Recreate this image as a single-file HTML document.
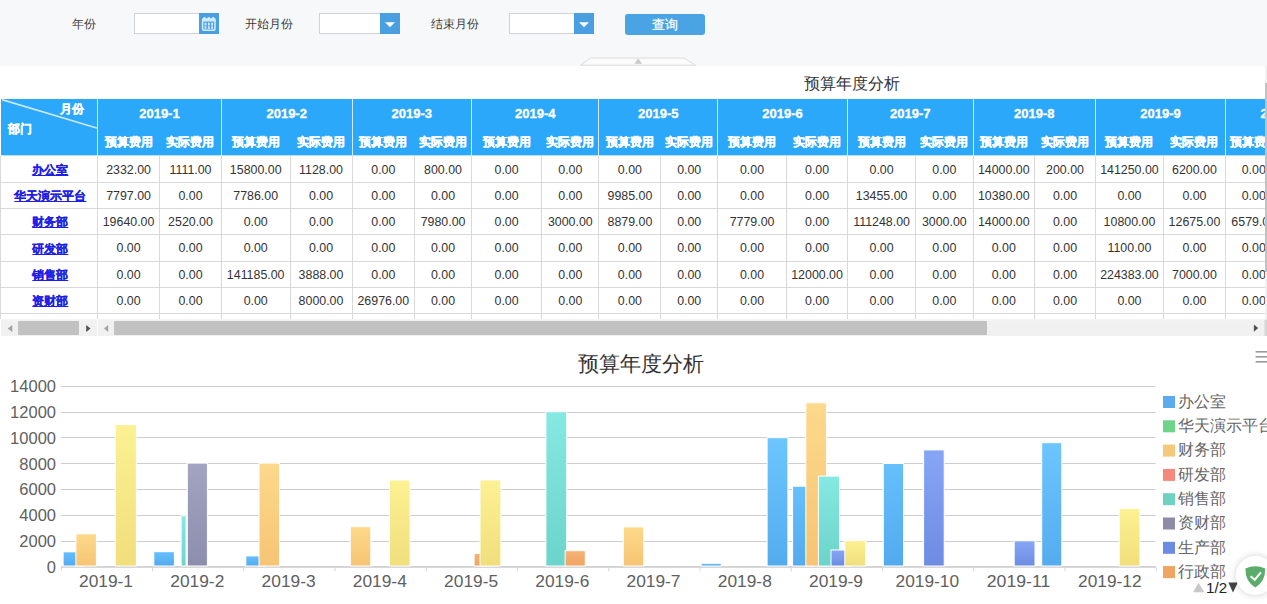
<!DOCTYPE html>
<html><head><meta charset="utf-8"><style>
*{margin:0;padding:0;box-sizing:border-box}
html,body{width:1267px;height:604px;overflow:hidden;background:#f7f8fa;font-family:"Liberation Sans",sans-serif}
.abs{position:absolute}
.lbl{position:absolute;font-family:"Liberation Serif",serif;font-size:12px;color:#3a3a3a;line-height:20px;top:13.5px}
.inp{position:absolute;top:13px;height:21px;background:#fff;border:1px solid #cfd3d8}
.btnb{position:absolute;top:13px;height:21px;width:20px;background:#4a9fe0}
.th{position:absolute;color:#fff;font-weight:bold;text-align:center;white-space:nowrap;-webkit-text-stroke:0.3px #fff}
.vl{position:absolute;width:1px;background:#d9d9d9}
.hl{position:absolute;height:1px;background:#d9d9d9}
.td{position:absolute;font-size:12.4px;color:#333;text-align:center;white-space:nowrap;line-height:26px}
.dp{position:absolute;left:1px;width:96px;text-align:center;font-size:12px;font-weight:bold;color:#1e1ee6;text-decoration:underline;-webkit-text-stroke:0.2px #1e1ee6;line-height:26px;white-space:nowrap}
</style></head><body>

<div class="lbl" style="left:72px">年份</div>
<div class="inp" style="left:134px;width:66px"></div>
<div class="btnb" style="left:199px;background:#4a9fe0"><svg width="20" height="21" viewBox="0 0 20 21"><rect x="3.6" y="6.2" width="12.4" height="11" rx="1.8" fill="none" stroke="#d4ecff" stroke-width="1.5"/><rect x="3" y="5.5" width="13.6" height="3" fill="#d4ecff"/><g fill="#d4ecff"><circle cx="5.5" cy="5.3" r="1.3"/><circle cx="9.8" cy="5.3" r="1.3"/><circle cx="14.1" cy="5.3" r="1.3"/><rect x="5.6" y="9.6" width="1.8" height="3"/><rect x="8.9" y="9.6" width="1.8" height="3"/><rect x="12.2" y="9.6" width="1.8" height="3"/><rect x="5.6" y="13.3" width="1.8" height="2.6"/><rect x="8.9" y="13.3" width="1.8" height="2.6"/><rect x="12.2" y="13.3" width="1.8" height="2.6"/></g></svg></div>
<div class="lbl" style="left:245px">开始月份</div>
<div class="inp" style="left:319px;width:62px"></div>
<div class="btnb" style="left:380px"><svg width="20" height="21"><path d="M5 9.2h10l-5 5z" fill="#fff"/></svg></div>
<div class="lbl" style="left:431px">结束月份</div>
<div class="inp" style="left:509px;width:66px"></div>
<div class="btnb" style="left:574px"><svg width="20" height="21"><path d="M5 9.2h10l-5 5z" fill="#fff"/></svg></div>
<div class="abs" style="left:625px;top:13.5px;width:80px;height:21px;background:#4aa4e3;border-radius:3px;color:#fff;font-size:13px;text-align:center;line-height:21px;-webkit-text-stroke:0.25px #fff">查询</div>
<svg class="abs" style="left:0;top:0" width="1267" height="70"><path d="M580.5 65.2 L590.5 58 H684 L695.5 65.2z" fill="#fbfbfc" stroke="#dcdcdc" stroke-width="1"/><path d="M634.3 63.8 L638.2 58.6 L642.1 63.8z" fill="#cacaca"/></svg>
<div class="abs" style="left:0;top:66px;width:1267px;height:538px;background:#fff"></div>
<div class="abs" style="left:804px;top:73.6px;font-size:16px;color:#333;line-height:20px">预算年度分析</div>
<div class="abs" style="left:1px;top:99.3px;width:1264px;height:56.4px;background:#2ca8fb"></div>
<div class="abs" style="left:1px;top:155px;width:1264px;height:1px;background:#b9e0fb"></div>
<svg class="abs" style="left:1px;top:99px" width="97" height="57"><line x1="1" y1="0.6" x2="96.5" y2="29.3" stroke="#c9e8fd" stroke-width="1.7"/></svg>
<div class="th" style="left:60px;top:101px;font-size:12px;line-height:16px">月份</div>
<div class="th" style="left:8px;top:121px;font-size:12px;line-height:16px">部门</div>
<div class="abs" style="left:97px;top:99px;width:1px;height:57px;background:#d2ecfd"></div>
<div class="th" style="left:97.5px;width:123.9px;top:104px;font-size:13px;line-height:20px">2019-1</div>
<div class="th" style="left:97.5px;width:62.1px;top:134px;font-size:12px;line-height:16px">预算费用</div>
<div class="th" style="left:159.6px;width:61.8px;top:134px;font-size:12px;line-height:16px">实际费用</div>
<div class="abs" style="left:221px;top:99px;width:1px;height:57px;background:#d2ecfd"></div>
<div class="th" style="left:221.4px;width:130.6px;top:104px;font-size:13px;line-height:20px">2019-2</div>
<div class="th" style="left:221.4px;width:68.6px;top:134px;font-size:12px;line-height:16px">预算费用</div>
<div class="th" style="left:290.0px;width:62.0px;top:134px;font-size:12px;line-height:16px">实际费用</div>
<div class="abs" style="left:352px;top:99px;width:1px;height:57px;background:#d2ecfd"></div>
<div class="th" style="left:352.0px;width:119.5px;top:104px;font-size:13px;line-height:20px">2019-3</div>
<div class="th" style="left:352.0px;width:62.6px;top:134px;font-size:12px;line-height:16px">预算费用</div>
<div class="th" style="left:414.6px;width:56.9px;top:134px;font-size:12px;line-height:16px">实际费用</div>
<div class="abs" style="left:471px;top:99px;width:1px;height:57px;background:#d2ecfd"></div>
<div class="th" style="left:471.5px;width:127.5px;top:104px;font-size:13px;line-height:20px">2019-4</div>
<div class="th" style="left:471.5px;width:70.2px;top:134px;font-size:12px;line-height:16px">预算费用</div>
<div class="th" style="left:541.7px;width:57.3px;top:134px;font-size:12px;line-height:16px">实际费用</div>
<div class="abs" style="left:598px;top:99px;width:1px;height:57px;background:#d2ecfd"></div>
<div class="th" style="left:599.0px;width:118.6px;top:104px;font-size:13px;line-height:20px">2019-5</div>
<div class="th" style="left:599.0px;width:61.8px;top:134px;font-size:12px;line-height:16px">预算费用</div>
<div class="th" style="left:660.8px;width:56.8px;top:134px;font-size:12px;line-height:16px">实际费用</div>
<div class="abs" style="left:717px;top:99px;width:1px;height:57px;background:#d2ecfd"></div>
<div class="th" style="left:717.6px;width:130.0px;top:104px;font-size:13px;line-height:20px">2019-6</div>
<div class="th" style="left:717.6px;width:68.9px;top:134px;font-size:12px;line-height:16px">预算费用</div>
<div class="th" style="left:786.5px;width:61.1px;top:134px;font-size:12px;line-height:16px">实际费用</div>
<div class="abs" style="left:847px;top:99px;width:1px;height:57px;background:#d2ecfd"></div>
<div class="th" style="left:847.6px;width:125.5px;top:104px;font-size:13px;line-height:20px">2019-7</div>
<div class="th" style="left:847.6px;width:68.0px;top:134px;font-size:12px;line-height:16px">预算费用</div>
<div class="th" style="left:915.6px;width:57.5px;top:134px;font-size:12px;line-height:16px">实际费用</div>
<div class="abs" style="left:973px;top:99px;width:1px;height:57px;background:#d2ecfd"></div>
<div class="th" style="left:973.1px;width:122.4px;top:104px;font-size:13px;line-height:20px">2019-8</div>
<div class="th" style="left:973.1px;width:61.4px;top:134px;font-size:12px;line-height:16px">预算费用</div>
<div class="th" style="left:1034.5px;width:61.0px;top:134px;font-size:12px;line-height:16px">实际费用</div>
<div class="abs" style="left:1095px;top:99px;width:1px;height:57px;background:#d2ecfd"></div>
<div class="th" style="left:1095.5px;width:130.0px;top:104px;font-size:13px;line-height:20px">2019-9</div>
<div class="th" style="left:1095.5px;width:67.9px;top:134px;font-size:12px;line-height:16px">预算费用</div>
<div class="th" style="left:1163.4px;width:62.1px;top:134px;font-size:12px;line-height:16px">实际费用</div>
<div class="abs" style="left:1225px;top:99px;width:1px;height:57px;background:#d2ecfd"></div>
<div class="th" style="left:1225.5px;width:117.5px;top:104px;font-size:13px;line-height:20px">2019-10</div>
<div class="th" style="left:1225.5px;width:56.5px;top:134px;font-size:12px;line-height:16px">预算费用</div>
<div class="th" style="left:1282.0px;width:61.0px;top:134px;font-size:12px;line-height:16px">实际费用</div>
<div class="abs" style="left:0;top:0;width:1264.5px;height:319px;overflow:hidden">
<div class="vl" style="left:0px;top:156px;height:163px"></div>
<div class="vl" style="left:97px;top:156px;height:163px"></div>
<div class="vl" style="left:159px;top:156px;height:163px"></div>
<div class="vl" style="left:221px;top:156px;height:163px"></div>
<div class="vl" style="left:290px;top:156px;height:163px"></div>
<div class="vl" style="left:352px;top:156px;height:163px"></div>
<div class="vl" style="left:414px;top:156px;height:163px"></div>
<div class="vl" style="left:471px;top:156px;height:163px"></div>
<div class="vl" style="left:541px;top:156px;height:163px"></div>
<div class="vl" style="left:598px;top:156px;height:163px"></div>
<div class="vl" style="left:660px;top:156px;height:163px"></div>
<div class="vl" style="left:717px;top:156px;height:163px"></div>
<div class="vl" style="left:786px;top:156px;height:163px"></div>
<div class="vl" style="left:847px;top:156px;height:163px"></div>
<div class="vl" style="left:915px;top:156px;height:163px"></div>
<div class="vl" style="left:973px;top:156px;height:163px"></div>
<div class="vl" style="left:1034px;top:156px;height:163px"></div>
<div class="vl" style="left:1095px;top:156px;height:163px"></div>
<div class="vl" style="left:1163px;top:156px;height:163px"></div>
<div class="vl" style="left:1225px;top:156px;height:163px"></div>
<div class="hl" style="left:1px;top:182px;width:1264px"></div>
<div class="hl" style="left:1px;top:208px;width:1264px"></div>
<div class="hl" style="left:1px;top:234px;width:1264px"></div>
<div class="hl" style="left:1px;top:261px;width:1264px"></div>
<div class="hl" style="left:1px;top:287px;width:1264px"></div>
<div class="hl" style="left:1px;top:313px;width:1264px"></div>
<div class="dp" style="left:2.3px;top:160.1px;line-height:20px">办公室</div>
<div class="td" style="left:97.5px;width:62.1px;top:159.7px;line-height:20px">2332.00</div>
<div class="td" style="left:159.6px;width:61.8px;top:159.7px;line-height:20px">1111.00</div>
<div class="td" style="left:221.4px;width:68.6px;top:159.7px;line-height:20px">15800.00</div>
<div class="td" style="left:290.0px;width:62.0px;top:159.7px;line-height:20px">1128.00</div>
<div class="td" style="left:352.0px;width:62.6px;top:159.7px;line-height:20px">0.00</div>
<div class="td" style="left:414.6px;width:56.9px;top:159.7px;line-height:20px">800.00</div>
<div class="td" style="left:471.5px;width:70.2px;top:159.7px;line-height:20px">0.00</div>
<div class="td" style="left:541.7px;width:57.3px;top:159.7px;line-height:20px">0.00</div>
<div class="td" style="left:599.0px;width:61.8px;top:159.7px;line-height:20px">0.00</div>
<div class="td" style="left:660.8px;width:56.8px;top:159.7px;line-height:20px">0.00</div>
<div class="td" style="left:717.6px;width:68.9px;top:159.7px;line-height:20px">0.00</div>
<div class="td" style="left:786.5px;width:61.1px;top:159.7px;line-height:20px">0.00</div>
<div class="td" style="left:847.6px;width:68.0px;top:159.7px;line-height:20px">0.00</div>
<div class="td" style="left:915.6px;width:57.5px;top:159.7px;line-height:20px">0.00</div>
<div class="td" style="left:973.1px;width:61.4px;top:159.7px;line-height:20px">14000.00</div>
<div class="td" style="left:1034.5px;width:61.0px;top:159.7px;line-height:20px">200.00</div>
<div class="td" style="left:1095.5px;width:67.9px;top:159.7px;line-height:20px">141250.00</div>
<div class="td" style="left:1163.4px;width:62.1px;top:159.7px;line-height:20px">6200.00</div>
<div class="td" style="left:1225.5px;width:56.5px;top:159.7px;line-height:20px">0.00</div>
<div class="dp" style="left:2.3px;top:186.2px;line-height:20px">华天演示平台</div>
<div class="td" style="left:97.5px;width:62.1px;top:185.8px;line-height:20px">7797.00</div>
<div class="td" style="left:159.6px;width:61.8px;top:185.8px;line-height:20px">0.00</div>
<div class="td" style="left:221.4px;width:68.6px;top:185.8px;line-height:20px">7786.00</div>
<div class="td" style="left:290.0px;width:62.0px;top:185.8px;line-height:20px">0.00</div>
<div class="td" style="left:352.0px;width:62.6px;top:185.8px;line-height:20px">0.00</div>
<div class="td" style="left:414.6px;width:56.9px;top:185.8px;line-height:20px">0.00</div>
<div class="td" style="left:471.5px;width:70.2px;top:185.8px;line-height:20px">0.00</div>
<div class="td" style="left:541.7px;width:57.3px;top:185.8px;line-height:20px">0.00</div>
<div class="td" style="left:599.0px;width:61.8px;top:185.8px;line-height:20px">9985.00</div>
<div class="td" style="left:660.8px;width:56.8px;top:185.8px;line-height:20px">0.00</div>
<div class="td" style="left:717.6px;width:68.9px;top:185.8px;line-height:20px">0.00</div>
<div class="td" style="left:786.5px;width:61.1px;top:185.8px;line-height:20px">0.00</div>
<div class="td" style="left:847.6px;width:68.0px;top:185.8px;line-height:20px">13455.00</div>
<div class="td" style="left:915.6px;width:57.5px;top:185.8px;line-height:20px">0.00</div>
<div class="td" style="left:973.1px;width:61.4px;top:185.8px;line-height:20px">10380.00</div>
<div class="td" style="left:1034.5px;width:61.0px;top:185.8px;line-height:20px">0.00</div>
<div class="td" style="left:1095.5px;width:67.9px;top:185.8px;line-height:20px">0.00</div>
<div class="td" style="left:1163.4px;width:62.1px;top:185.8px;line-height:20px">0.00</div>
<div class="td" style="left:1225.5px;width:56.5px;top:185.8px;line-height:20px">0.00</div>
<div class="dp" style="left:2.3px;top:212.2px;line-height:20px">财务部</div>
<div class="td" style="left:97.5px;width:62.1px;top:211.8px;line-height:20px">19640.00</div>
<div class="td" style="left:159.6px;width:61.8px;top:211.8px;line-height:20px">2520.00</div>
<div class="td" style="left:221.4px;width:68.6px;top:211.8px;line-height:20px">0.00</div>
<div class="td" style="left:290.0px;width:62.0px;top:211.8px;line-height:20px">0.00</div>
<div class="td" style="left:352.0px;width:62.6px;top:211.8px;line-height:20px">0.00</div>
<div class="td" style="left:414.6px;width:56.9px;top:211.8px;line-height:20px">7980.00</div>
<div class="td" style="left:471.5px;width:70.2px;top:211.8px;line-height:20px">0.00</div>
<div class="td" style="left:541.7px;width:57.3px;top:211.8px;line-height:20px">3000.00</div>
<div class="td" style="left:599.0px;width:61.8px;top:211.8px;line-height:20px">8879.00</div>
<div class="td" style="left:660.8px;width:56.8px;top:211.8px;line-height:20px">0.00</div>
<div class="td" style="left:717.6px;width:68.9px;top:211.8px;line-height:20px">7779.00</div>
<div class="td" style="left:786.5px;width:61.1px;top:211.8px;line-height:20px">0.00</div>
<div class="td" style="left:847.6px;width:68.0px;top:211.8px;line-height:20px">111248.00</div>
<div class="td" style="left:915.6px;width:57.5px;top:211.8px;line-height:20px">3000.00</div>
<div class="td" style="left:973.1px;width:61.4px;top:211.8px;line-height:20px">14000.00</div>
<div class="td" style="left:1034.5px;width:61.0px;top:211.8px;line-height:20px">0.00</div>
<div class="td" style="left:1095.5px;width:67.9px;top:211.8px;line-height:20px">10800.00</div>
<div class="td" style="left:1163.4px;width:62.1px;top:211.8px;line-height:20px">12675.00</div>
<div class="td" style="left:1225.5px;width:56.5px;top:211.8px;line-height:20px">6579.00</div>
<div class="dp" style="left:2.3px;top:238.7px;line-height:20px">研发部</div>
<div class="td" style="left:97.5px;width:62.1px;top:238.3px;line-height:20px">0.00</div>
<div class="td" style="left:159.6px;width:61.8px;top:238.3px;line-height:20px">0.00</div>
<div class="td" style="left:221.4px;width:68.6px;top:238.3px;line-height:20px">0.00</div>
<div class="td" style="left:290.0px;width:62.0px;top:238.3px;line-height:20px">0.00</div>
<div class="td" style="left:352.0px;width:62.6px;top:238.3px;line-height:20px">0.00</div>
<div class="td" style="left:414.6px;width:56.9px;top:238.3px;line-height:20px">0.00</div>
<div class="td" style="left:471.5px;width:70.2px;top:238.3px;line-height:20px">0.00</div>
<div class="td" style="left:541.7px;width:57.3px;top:238.3px;line-height:20px">0.00</div>
<div class="td" style="left:599.0px;width:61.8px;top:238.3px;line-height:20px">0.00</div>
<div class="td" style="left:660.8px;width:56.8px;top:238.3px;line-height:20px">0.00</div>
<div class="td" style="left:717.6px;width:68.9px;top:238.3px;line-height:20px">0.00</div>
<div class="td" style="left:786.5px;width:61.1px;top:238.3px;line-height:20px">0.00</div>
<div class="td" style="left:847.6px;width:68.0px;top:238.3px;line-height:20px">0.00</div>
<div class="td" style="left:915.6px;width:57.5px;top:238.3px;line-height:20px">0.00</div>
<div class="td" style="left:973.1px;width:61.4px;top:238.3px;line-height:20px">0.00</div>
<div class="td" style="left:1034.5px;width:61.0px;top:238.3px;line-height:20px">0.00</div>
<div class="td" style="left:1095.5px;width:67.9px;top:238.3px;line-height:20px">1100.00</div>
<div class="td" style="left:1163.4px;width:62.1px;top:238.3px;line-height:20px">0.00</div>
<div class="td" style="left:1225.5px;width:56.5px;top:238.3px;line-height:20px">0.00</div>
<div class="dp" style="left:2.3px;top:265.2px;line-height:20px">销售部</div>
<div class="td" style="left:97.5px;width:62.1px;top:264.8px;line-height:20px">0.00</div>
<div class="td" style="left:159.6px;width:61.8px;top:264.8px;line-height:20px">0.00</div>
<div class="td" style="left:221.4px;width:68.6px;top:264.8px;line-height:20px">141185.00</div>
<div class="td" style="left:290.0px;width:62.0px;top:264.8px;line-height:20px">3888.00</div>
<div class="td" style="left:352.0px;width:62.6px;top:264.8px;line-height:20px">0.00</div>
<div class="td" style="left:414.6px;width:56.9px;top:264.8px;line-height:20px">0.00</div>
<div class="td" style="left:471.5px;width:70.2px;top:264.8px;line-height:20px">0.00</div>
<div class="td" style="left:541.7px;width:57.3px;top:264.8px;line-height:20px">0.00</div>
<div class="td" style="left:599.0px;width:61.8px;top:264.8px;line-height:20px">0.00</div>
<div class="td" style="left:660.8px;width:56.8px;top:264.8px;line-height:20px">0.00</div>
<div class="td" style="left:717.6px;width:68.9px;top:264.8px;line-height:20px">0.00</div>
<div class="td" style="left:786.5px;width:61.1px;top:264.8px;line-height:20px">12000.00</div>
<div class="td" style="left:847.6px;width:68.0px;top:264.8px;line-height:20px">0.00</div>
<div class="td" style="left:915.6px;width:57.5px;top:264.8px;line-height:20px">0.00</div>
<div class="td" style="left:973.1px;width:61.4px;top:264.8px;line-height:20px">0.00</div>
<div class="td" style="left:1034.5px;width:61.0px;top:264.8px;line-height:20px">0.00</div>
<div class="td" style="left:1095.5px;width:67.9px;top:264.8px;line-height:20px">224383.00</div>
<div class="td" style="left:1163.4px;width:62.1px;top:264.8px;line-height:20px">7000.00</div>
<div class="td" style="left:1225.5px;width:56.5px;top:264.8px;line-height:20px">0.00</div>
<div class="dp" style="left:2.3px;top:291.2px;line-height:20px">资财部</div>
<div class="td" style="left:97.5px;width:62.1px;top:290.8px;line-height:20px">0.00</div>
<div class="td" style="left:159.6px;width:61.8px;top:290.8px;line-height:20px">0.00</div>
<div class="td" style="left:221.4px;width:68.6px;top:290.8px;line-height:20px">0.00</div>
<div class="td" style="left:290.0px;width:62.0px;top:290.8px;line-height:20px">8000.00</div>
<div class="td" style="left:352.0px;width:62.6px;top:290.8px;line-height:20px">26976.00</div>
<div class="td" style="left:414.6px;width:56.9px;top:290.8px;line-height:20px">0.00</div>
<div class="td" style="left:471.5px;width:70.2px;top:290.8px;line-height:20px">0.00</div>
<div class="td" style="left:541.7px;width:57.3px;top:290.8px;line-height:20px">0.00</div>
<div class="td" style="left:599.0px;width:61.8px;top:290.8px;line-height:20px">0.00</div>
<div class="td" style="left:660.8px;width:56.8px;top:290.8px;line-height:20px">0.00</div>
<div class="td" style="left:717.6px;width:68.9px;top:290.8px;line-height:20px">0.00</div>
<div class="td" style="left:786.5px;width:61.1px;top:290.8px;line-height:20px">0.00</div>
<div class="td" style="left:847.6px;width:68.0px;top:290.8px;line-height:20px">0.00</div>
<div class="td" style="left:915.6px;width:57.5px;top:290.8px;line-height:20px">0.00</div>
<div class="td" style="left:973.1px;width:61.4px;top:290.8px;line-height:20px">0.00</div>
<div class="td" style="left:1034.5px;width:61.0px;top:290.8px;line-height:20px">0.00</div>
<div class="td" style="left:1095.5px;width:67.9px;top:290.8px;line-height:20px">0.00</div>
<div class="td" style="left:1163.4px;width:62.1px;top:290.8px;line-height:20px">0.00</div>
<div class="td" style="left:1225.5px;width:56.5px;top:290.8px;line-height:20px">0.00</div>
</div>
<div class="abs" style="left:1264.5px;top:66px;width:2.5px;height:270px;background:#f1f1f1"></div>
<div class="abs" style="left:1264.5px;top:83px;width:2.5px;height:189px;background:#c1c1c1"></div>
<div class="abs" style="left:1px;top:318.5px;width:1263.5px;height:17.5px;background:linear-gradient(#f7f7f7,#f1f1f1 2px)"></div>
<div class="abs" style="left:97px;top:318.5px;width:1px;height:17.5px;background:#fbfbfb"></div>
<div class="abs" style="left:18.3px;top:321px;width:60.7px;height:14px;background:#c1c1c1"></div>
<div class="abs" style="left:114.2px;top:321px;width:872.8px;height:14px;background:#c1c1c1"></div>
<svg class="abs" style="left:0;top:316px" width="1267" height="20"><path d="M7.7 12.5 L12.3 9 V16z" fill="#a3a3a3"/><path d="M90.5 12.5 L86.2 9 V16z" fill="#505050"/><path d="M104 12.5 L108.2 9 V16z" fill="#a3a3a3"/><path d="M1258.2 12 L1253.9 8.5 V15.8z" fill="#505050"/><rect x="1264.5" y="3.8" width="2.5" height="16.6" fill="#d6d6d6"/></svg>
<svg class="abs" style="left:0;top:0" width="1267" height="604" font-family="Liberation Sans, sans-serif">
<defs>
<linearGradient id="gblue" x1="0" y1="0" x2="0" y2="1"><stop offset="0" stop-color="#66c0fb"/><stop offset="1" stop-color="#53aaee"/></linearGradient>
<linearGradient id="ggold" x1="0" y1="0" x2="0" y2="1"><stop offset="0" stop-color="#fdd98b"/><stop offset="1" stop-color="#f6c474"/></linearGradient>
<linearGradient id="gteal" x1="0" y1="0" x2="0" y2="1"><stop offset="0" stop-color="#86e8e2"/><stop offset="1" stop-color="#6cd4ca"/></linearGradient>
<linearGradient id="gpurp" x1="0" y1="0" x2="0" y2="1"><stop offset="0" stop-color="#a3a3c2"/><stop offset="1" stop-color="#8d8dad"/></linearGradient>
<linearGradient id="gbpur" x1="0" y1="0" x2="0" y2="1"><stop offset="0" stop-color="#86a6f5"/><stop offset="1" stop-color="#6d8ce2"/></linearGradient>
<linearGradient id="gorng" x1="0" y1="0" x2="0" y2="1"><stop offset="0" stop-color="#f6b276"/><stop offset="1" stop-color="#f0a462"/></linearGradient>
<linearGradient id="gyell" x1="0" y1="0" x2="0" y2="1"><stop offset="0" stop-color="#fcf193"/><stop offset="1" stop-color="#f1de7c"/></linearGradient>
<linearGradient id="glblu" x1="0" y1="0" x2="0" y2="1"><stop offset="0" stop-color="#6cc6fd"/><stop offset="1" stop-color="#54acee"/></linearGradient>
<linearGradient id="gpink" x1="0" y1="0" x2="0" y2="1"><stop offset="0" stop-color="#f7a0a0"/><stop offset="1" stop-color="#f08080"/></linearGradient>
</defs>
<text x="641" y="371.2" font-size="21" fill="#333" text-anchor="middle">预算年度分析</text>
<text x="56" y="572.8" font-size="16.5" fill="#606060" text-anchor="end">0</text>
<rect x="61" y="541" width="1094.5" height="1" fill="#cdcdcd"/>
<text x="56" y="547.0" font-size="16.5" fill="#606060" text-anchor="end">2000</text>
<rect x="61" y="515" width="1094.5" height="1" fill="#cdcdcd"/>
<text x="56" y="521.2" font-size="16.5" fill="#606060" text-anchor="end">4000</text>
<rect x="61" y="489" width="1094.5" height="1" fill="#cdcdcd"/>
<text x="56" y="495.4" font-size="16.5" fill="#606060" text-anchor="end">6000</text>
<rect x="61" y="463" width="1094.5" height="1" fill="#cdcdcd"/>
<text x="56" y="469.6" font-size="16.5" fill="#606060" text-anchor="end">8000</text>
<rect x="61" y="437" width="1094.5" height="1" fill="#cdcdcd"/>
<text x="56" y="443.8" font-size="16.5" fill="#606060" text-anchor="end">10000</text>
<rect x="61" y="412" width="1094.5" height="1" fill="#cdcdcd"/>
<text x="56" y="418.0" font-size="16.5" fill="#606060" text-anchor="end">12000</text>
<rect x="61" y="386" width="1094.5" height="1" fill="#cdcdcd"/>
<text x="56" y="392.2" font-size="16.5" fill="#606060" text-anchor="end">14000</text>
<rect x="61" y="566.2" width="1095" height="1.5" fill="#c8c8c8"/>
<rect x="60.8" y="567.3" width="1" height="4" fill="#d8d8d8"/>
<rect x="152.0" y="567.3" width="1" height="4" fill="#d8d8d8"/>
<rect x="243.2" y="567.3" width="1" height="4" fill="#d8d8d8"/>
<rect x="334.5" y="567.3" width="1" height="4" fill="#d8d8d8"/>
<rect x="425.8" y="567.3" width="1" height="4" fill="#d8d8d8"/>
<rect x="517.0" y="567.3" width="1" height="4" fill="#d8d8d8"/>
<rect x="608.2" y="567.3" width="1" height="4" fill="#d8d8d8"/>
<rect x="699.5" y="567.3" width="1" height="4" fill="#d8d8d8"/>
<rect x="790.8" y="567.3" width="1" height="4" fill="#d8d8d8"/>
<rect x="882.0" y="567.3" width="1" height="4" fill="#d8d8d8"/>
<rect x="973.2" y="567.3" width="1" height="4" fill="#d8d8d8"/>
<rect x="1064.5" y="567.3" width="1" height="4" fill="#d8d8d8"/>
<rect x="1155.8" y="567.3" width="1" height="4" fill="#d8d8d8"/>
<text x="106.0" y="587.3" font-size="16.3" fill="#606060" text-anchor="middle" textLength="54.0" lengthAdjust="spacingAndGlyphs">2019-1</text>
<text x="197.3" y="587.3" font-size="16.3" fill="#606060" text-anchor="middle" textLength="54.0" lengthAdjust="spacingAndGlyphs">2019-2</text>
<text x="288.6" y="587.3" font-size="16.3" fill="#606060" text-anchor="middle" textLength="54.0" lengthAdjust="spacingAndGlyphs">2019-3</text>
<text x="379.8" y="587.3" font-size="16.3" fill="#606060" text-anchor="middle" textLength="54.0" lengthAdjust="spacingAndGlyphs">2019-4</text>
<text x="471.1" y="587.3" font-size="16.3" fill="#606060" text-anchor="middle" textLength="54.0" lengthAdjust="spacingAndGlyphs">2019-5</text>
<text x="562.3" y="587.3" font-size="16.3" fill="#606060" text-anchor="middle" textLength="54.0" lengthAdjust="spacingAndGlyphs">2019-6</text>
<text x="653.5" y="587.3" font-size="16.3" fill="#606060" text-anchor="middle" textLength="54.0" lengthAdjust="spacingAndGlyphs">2019-7</text>
<text x="744.8" y="587.3" font-size="16.3" fill="#606060" text-anchor="middle" textLength="54.0" lengthAdjust="spacingAndGlyphs">2019-8</text>
<text x="836.0" y="587.3" font-size="16.3" fill="#606060" text-anchor="middle" textLength="54.0" lengthAdjust="spacingAndGlyphs">2019-9</text>
<text x="927.3" y="587.3" font-size="16.3" fill="#606060" text-anchor="middle" textLength="63.5" lengthAdjust="spacingAndGlyphs">2019-10</text>
<text x="1018.5" y="587.3" font-size="16.3" fill="#606060" text-anchor="middle" textLength="63.5" lengthAdjust="spacingAndGlyphs">2019-11</text>
<text x="1109.8" y="587.3" font-size="16.3" fill="#606060" text-anchor="middle" textLength="63.5" lengthAdjust="spacingAndGlyphs">2019-12</text>
<rect x="63.1" y="551.8" width="19.9" height="14.2" fill="url(#gblue)" stroke="#fff" stroke-width="1"/>
<rect x="75.9" y="533.8" width="20.5" height="32.2" fill="url(#ggold)" stroke="#fff" stroke-width="1"/>
<rect x="115.2" y="424.6" width="21.2" height="141.4" fill="url(#gyell)" stroke="#fff" stroke-width="1"/>
<rect x="153.8" y="551.7" width="20.6" height="14.3" fill="url(#gblue)" stroke="#fff" stroke-width="1"/>
<rect x="181.1" y="515.8" width="5.0" height="50.2" fill="url(#gteal)" stroke="#fff" stroke-width="1"/>
<rect x="187.3" y="463.1" width="20.1" height="102.9" fill="url(#gpurp)" stroke="#fff" stroke-width="1"/>
<rect x="245.8" y="555.9" width="20.0" height="10.1" fill="url(#gblue)" stroke="#fff" stroke-width="1"/>
<rect x="259.0" y="463.1" width="20.5" height="102.9" fill="url(#ggold)" stroke="#fff" stroke-width="1"/>
<rect x="350.3" y="526.7" width="20.5" height="39.3" fill="url(#ggold)" stroke="#fff" stroke-width="1"/>
<rect x="389.5" y="480.0" width="20.6" height="86.0" fill="url(#gyell)" stroke="#fff" stroke-width="1"/>
<rect x="474.1" y="553.4" width="20.4" height="12.6" fill="url(#gorng)" stroke="#fff" stroke-width="1"/>
<rect x="480.0" y="479.9" width="20.9" height="86.1" fill="url(#gyell)" stroke="#fff" stroke-width="1"/>
<rect x="545.9" y="411.7" width="20.8" height="154.3" fill="url(#gteal)" stroke="#fff" stroke-width="1"/>
<rect x="565.1" y="550.7" width="20.2" height="15.3" fill="url(#gorng)" stroke="#fff" stroke-width="1"/>
<rect x="623.3" y="526.9" width="20.5" height="39.1" fill="url(#ggold)" stroke="#fff" stroke-width="1"/>
<rect x="701.1" y="563.3" width="20.1" height="2.7" fill="url(#gblue)" stroke="#fff" stroke-width="1"/>
<rect x="767.1" y="437.7" width="20.8" height="128.3" fill="url(#glblu)" stroke="#fff" stroke-width="1"/>
<rect x="792.6" y="486.2" width="20.7" height="79.8" fill="url(#gblue)" stroke="#fff" stroke-width="1"/>
<rect x="805.8" y="402.8" width="20.8" height="163.2" fill="url(#ggold)" stroke="#fff" stroke-width="1"/>
<rect x="818.4" y="476.1" width="21.1" height="89.9" fill="url(#gteal)" stroke="#fff" stroke-width="1"/>
<rect x="831.0" y="550.0" width="20.5" height="16.0" fill="url(#gbpur)" stroke="#fff" stroke-width="1"/>
<rect x="844.8" y="540.6" width="20.9" height="25.4" fill="url(#gyell)" stroke="#fff" stroke-width="1"/>
<rect x="883.3" y="463.5" width="20.2" height="102.5" fill="url(#gblue)" stroke="#fff" stroke-width="1"/>
<rect x="923.6" y="449.9" width="20.6" height="116.1" fill="url(#gbpur)" stroke="#fff" stroke-width="1"/>
<rect x="1014.2" y="540.8" width="20.8" height="25.2" fill="url(#gbpur)" stroke="#fff" stroke-width="1"/>
<rect x="1041.7" y="442.7" width="20.1" height="123.3" fill="url(#glblu)" stroke="#fff" stroke-width="1"/>
<rect x="1119.2" y="508.4" width="20.8" height="57.6" fill="url(#gyell)" stroke="#fff" stroke-width="1"/>
<rect x="1163" y="396.0" width="12" height="12" fill="#5aacef"/>
<text x="1177.6" y="406.8" font-size="15.6" fill="#666">办公室</text>
<rect x="1163" y="420.3" width="12" height="12" fill="#6fd38a"/>
<text x="1177.6" y="431.1" font-size="15.6" fill="#666">华天演示平台</text>
<rect x="1163" y="444.6" width="12" height="12" fill="#f4ca7a"/>
<text x="1177.6" y="455.4" font-size="15.6" fill="#666">财务部</text>
<rect x="1163" y="468.9" width="12" height="12" fill="#f58a7c"/>
<text x="1177.6" y="479.7" font-size="15.6" fill="#666">研发部</text>
<rect x="1163" y="493.2" width="12" height="12" fill="#6dd2c0"/>
<text x="1177.6" y="504.0" font-size="15.6" fill="#666">销售部</text>
<rect x="1163" y="517.5" width="12" height="12" fill="#8c8ca6"/>
<text x="1177.6" y="528.3" font-size="15.6" fill="#666">资财部</text>
<rect x="1163" y="541.8" width="12" height="12" fill="#6b8ce2"/>
<text x="1177.6" y="552.6" font-size="15.6" fill="#666">生产部</text>
<rect x="1163" y="566.1" width="12" height="12" fill="#f0a560"/>
<text x="1177.6" y="576.9" font-size="15.6" fill="#666">行政部</text>
<path d="M1193 592.2 L1198.6 582.7 L1204.3 592.2z" fill="#c8c8c8"/>
<text x="1206.1" y="592.5" font-size="14" fill="#222" textLength="21" lengthAdjust="spacingAndGlyphs">1/2</text>
<path d="M1228.3 582.5 L1237.8 582.5 L1233 592.5z" fill="#444"/>
<g fill="#999"><rect x="1255.6" y="351" width="12" height="1.6"/><rect x="1255.6" y="356" width="12" height="1.6"/><rect x="1255.6" y="361" width="12" height="1.6"/></g>
<defs><filter id="sh" x="-50%" y="-50%" width="200%" height="200%"><feGaussianBlur stdDeviation="3"/></filter></defs>
<circle cx="1255.3" cy="575.5" r="20.5" fill="#000" opacity="0.14" filter="url(#sh)"/>
<circle cx="1255.3" cy="575.5" r="19.5" fill="#fff"/>
<path d="M1245.4 568.6 Q1255.3 563.8 1265.2 568.6 Q1265.4 582 1255.3 587.4 Q1245.2 582 1245.4 568.6z" fill="#5cad6b"/>
<path d="M1250.6 576.3 L1254.7 579.8 L1260.9 572.3" fill="none" stroke="#fff" stroke-width="2.1"/>
</svg>
</body></html>
